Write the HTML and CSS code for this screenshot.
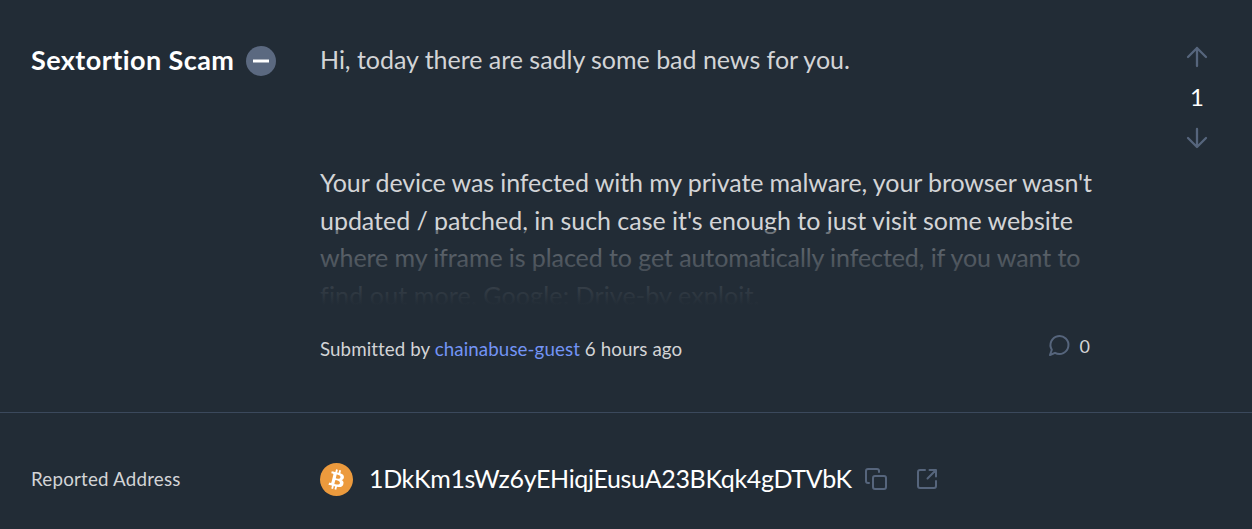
FILE: index.html
```html
<!DOCTYPE html>
<html lang="en">
<head>
<meta charset="utf-8">
<title>Scam report</title>
<link rel="stylesheet" href="styles.css">
</head>
<body>
<main class="report">
  <section class="summary">
    <h1 class="category"><span class="category-name">Sextortion Scam</span>
      <svg class="minus" viewBox="0 0 30 30"><circle cx="15" cy="15" r="15"/><path d="M7 15h16"/></svg>
    </h1>
    <div class="content">
      <div class="description">
        <p class="intro"><span class="line line-greeting">Hi, today there are sadly some bad news for you.</span></p>
        <p class="details">
          <span class="line line-device">Your device was infected with my private malware, your browser wasn't</span>
          <span class="line line-updated">updated / patched, in such case it's enough to just visit some website</span>
          <span class="line line-iframe">where my iframe is placed to get automatically infected, if you want to</span>
          <span class="line line-exploit">find out more, Google: Drive-by exploit.</span>
        </p>
        <div class="fade"></div>
      </div>
      <footer class="meta">
        <span class="byline">Submitted by <a class="author">chainabuse-guest</a> 6 hours ago</span>
        <span class="comments">
          <svg class="icon bubble" viewBox="0 0 22 22"><path d="M2 20L3.800 14.700A9 9 0 1 1 7 17.800Z"/></svg>
          <span>0</span>
        </span>
      </footer>
    </div>
    <div class="votes">
      <svg class="icon arrow" viewBox="0 0 20 20"><path d="M10 19V1M1 10l9-9 9 9"/></svg>
      <span class="count">1</span>
      <svg class="icon arrow" viewBox="0 0 20 20"><path d="M10 1v18M1 10l9 9 9-9"/></svg>
    </div>
  </section>
  <section class="address">
    <h2 class="label">Reported Address</h2>
    <div class="wallet">
      <svg class="coin" viewBox="0 0 32 32"><circle cx="16" cy="16" r="16"/><path d="M23.189 14.020c.314-2.096-1.283-3.223-3.465-3.975l.708-2.840-1.728-.430-.690 2.765c-.454-.114-.920-.220-1.385-.326l.695-2.783L15.596 6l-.708 2.839c-.376-.086-.746-.170-1.104-.260l.002-.009-2.384-.595-.460 1.846s1.283.294 1.256.312c.700.175.826.638.805 1.006l-.806 3.235c.048.012.110.030.180.057l-.183-.045-1.130 4.532c-.086.212-.303.531-.793.410.018.025-1.256-.313-1.256-.313l-.858 1.978 2.250.561c.418.105.828.215 1.231.318l-.715 2.872 1.727.430.708-2.840c.472.127.930.245 1.378.357l-.706 2.828 1.728.430.715-2.866c2.948.558 5.164.333 6.097-2.333.752-2.146-.037-3.385-1.588-4.192 1.130-.260 1.980-1.003 2.207-2.538zm-3.950 5.538c-.533 2.147-4.148.986-5.320.695l.950-3.805c1.172.293 4.929.872 4.370 3.110zm.535-5.569c-.487 1.953-3.495.960-4.470.717l.860-3.450c.975.243 4.118.696 3.610 2.733z"/></svg>
      <span class="hash">1DkKm1sWz6yEHiqjEusuA23BKqk4gDTVbK</span>
      <svg class="icon copy" viewBox="0 0 22 22"><path d="M4 15H3a2 2 0 0 1-2-2V3a2 2 0 0 1 2-2h9a2 2 0 0 1 2 2v1"/><rect x="8" y="8" width="13" height="13" rx="2"/></svg>
      <svg class="icon open" viewBox="0 0 20 20"><path d="M8 1H3a2 2 0 0 0-2 2v14a2 2 0 0 0 2 2h14a2 2 0 0 0 2-2v-5M12.500 1H19v6.500M19 1l-8.500 8.500"/></svg>
    </div>
  </section>
</main>
</body>
</html>
```
FILE: styles.css
```css
* { box-sizing: border-box; }
body { margin: 0; background: #222c36; color: #d3d4d6; font-family: Lato, "Open Sans", sans-serif; font-variant-ligatures: none; }
h1, h2, p { margin: 0; font-weight: 400; }
.report { height: 529px; overflow: hidden; }
.summary { display: flex; height: 413px; padding: 41px 44px 0 31px; border-bottom: 1px solid #3b495c; }
.category { display: flex; align-items: center; gap: 12px; width: 289px; height: 40px; }
.category-name { width: 203px; padding-bottom: 2px; color: #fff; font-size: 27px; line-height: 36px; font-weight: 700; letter-spacing: .43px; white-space: nowrap; }
.minus { flex: none; width: 30px; height: 30px; fill: #5b6980; stroke: none; }
.minus path { stroke: #fff; stroke-width: 3; }
.content { width: 773px; }
.description { position: relative; height: 263px; font-size: 25px; line-height: 37.5px; }
.intro { height: 123.4px; }
.line { display: table; white-space: nowrap; }
.line-greeting { letter-spacing: -.02px; }
.line-device { letter-spacing: -.09px; }
.line-updated { letter-spacing: -.03px; }
.line-iframe { letter-spacing: -.08px; }
.line-exploit { letter-spacing: .14px; }
.fade { position: absolute; left: 0; right: 0; top: 189px; height: 90px; background: linear-gradient(rgba(34, 44, 54, .55), #222c36 75px); }
.meta { display: flex; justify-content: space-between; padding-top: 30px; font-size: 18.75px; line-height: 30px; }
.byline { letter-spacing: .08px; white-space: nowrap; }
.author { color: #7394f5; }
.comments { display: flex; align-items: center; gap: 10px; height: 24px; padding-right: 3px; font-size: 18px; }
.icon { fill: none; stroke: #56657c; stroke-width: 2; stroke-linecap: round; stroke-linejoin: round; overflow: visible; }
.bubble { width: 22px; height: 22px; }
.votes { display: flex; flex-direction: column; align-items: center; width: 22px; margin-left: auto; padding-top: 6px; color: #fff; font-size: 24px; line-height: 38px; }
.arrow { width: 20px; height: 20px; stroke-width: 2.3; }
.count { margin: 11px 0 12px; }
.address { display: flex; align-items: center; height: 116px; padding: 16px 0 0 31px; }
.label { width: 289px; padding-bottom: 1px; font-size: 18.75px; letter-spacing: .2px; }
.wallet { display: flex; align-items: center; color: #fff; font-size: 25px; }
.coin { width: 33px; height: 33px; margin-right: 16px; fill: #ec9a3d; }
.coin path { fill: #fff; }
.hash { padding-bottom: 2px; letter-spacing: -.34px; white-space: nowrap; }
.copy { width: 22px; height: 22px; margin-left: 13px; }
.open { width: 20px; height: 20px; margin-left: 30px; }
```
